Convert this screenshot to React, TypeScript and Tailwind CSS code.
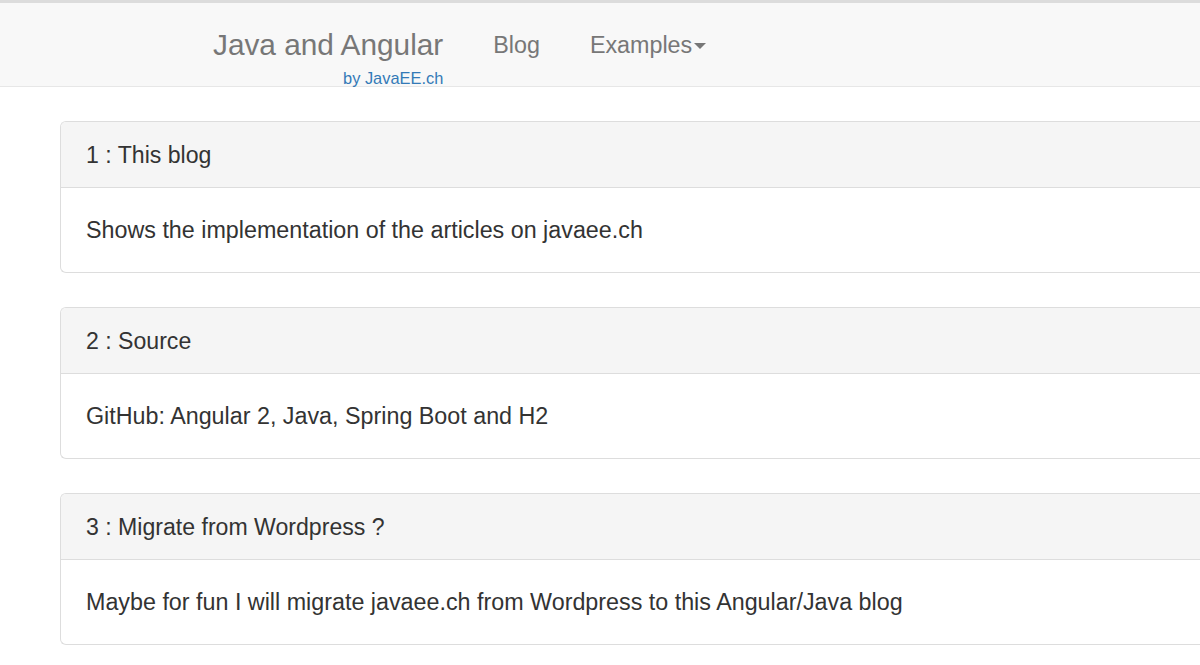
const panels = [
  { title: "1 : This blog", body: "Shows the implementation of the articles on javaee.ch" },
  { title: "2 : Source", body: "GitHub: Angular 2, Java, Spring Boot and H2" },
  { title: "3 : Migrate from Wordpress ?", body: "Maybe for fun I will migrate javaee.ch from Wordpress to this Angular/Java blog" },
];

export default function App() {
  return (
    <div className="min-h-[665px] bg-white overflow-hidden font-['Liberation_Sans',Arial,sans-serif] text-[#333]">
      {/* Navbar */}
      <div className="h-[87px] bg-[#f8f8f8] border-t-[3px] border-t-[#dcdcdc] border-b border-b-[#e7e7e7] flex items-start pl-[213px] pt-[27px] text-[#777]">
        <div className="flex flex-col items-end">
          <span className="text-[29.8px] leading-[30px]">Java and Angular</span>
          <span className="text-[16.4px] leading-[20px] mt-[8px] text-[#337ab7]">by JavaEE.ch</span>
        </div>
        <span className="ml-[50px] text-[23.3px] leading-[30px]">Blog</span>
        <span className="ml-[50px] text-[23.3px] leading-[30px] flex items-center">
          Examples
          <span className="ml-[2px] mt-[2px] w-0 h-0 border-l-[6px] border-r-[6px] border-t-[6px] border-l-transparent border-r-transparent border-t-[#777]"></span>
        </span>
      </div>

      {/* Panels */}
      <div className="pl-[60px] pt-[34px]">
        {panels.map((p) => (
          <div
            key={p.title}
            className="mb-[34px] border border-r-0 border-[#ddd] rounded-l-[6px] overflow-hidden"
          >
            <div className="h-[66px] bg-[#f5f5f5] border-b border-[#ddd] flex items-center pl-[25px] pt-[2px] text-[23.1px]">
              {p.title}
            </div>
            <div className="h-[84px] flex items-center pl-[25px] pt-[1px] text-[23.3px]">{p.body}</div>
          </div>
        ))}
      </div>
    </div>
  );
}
